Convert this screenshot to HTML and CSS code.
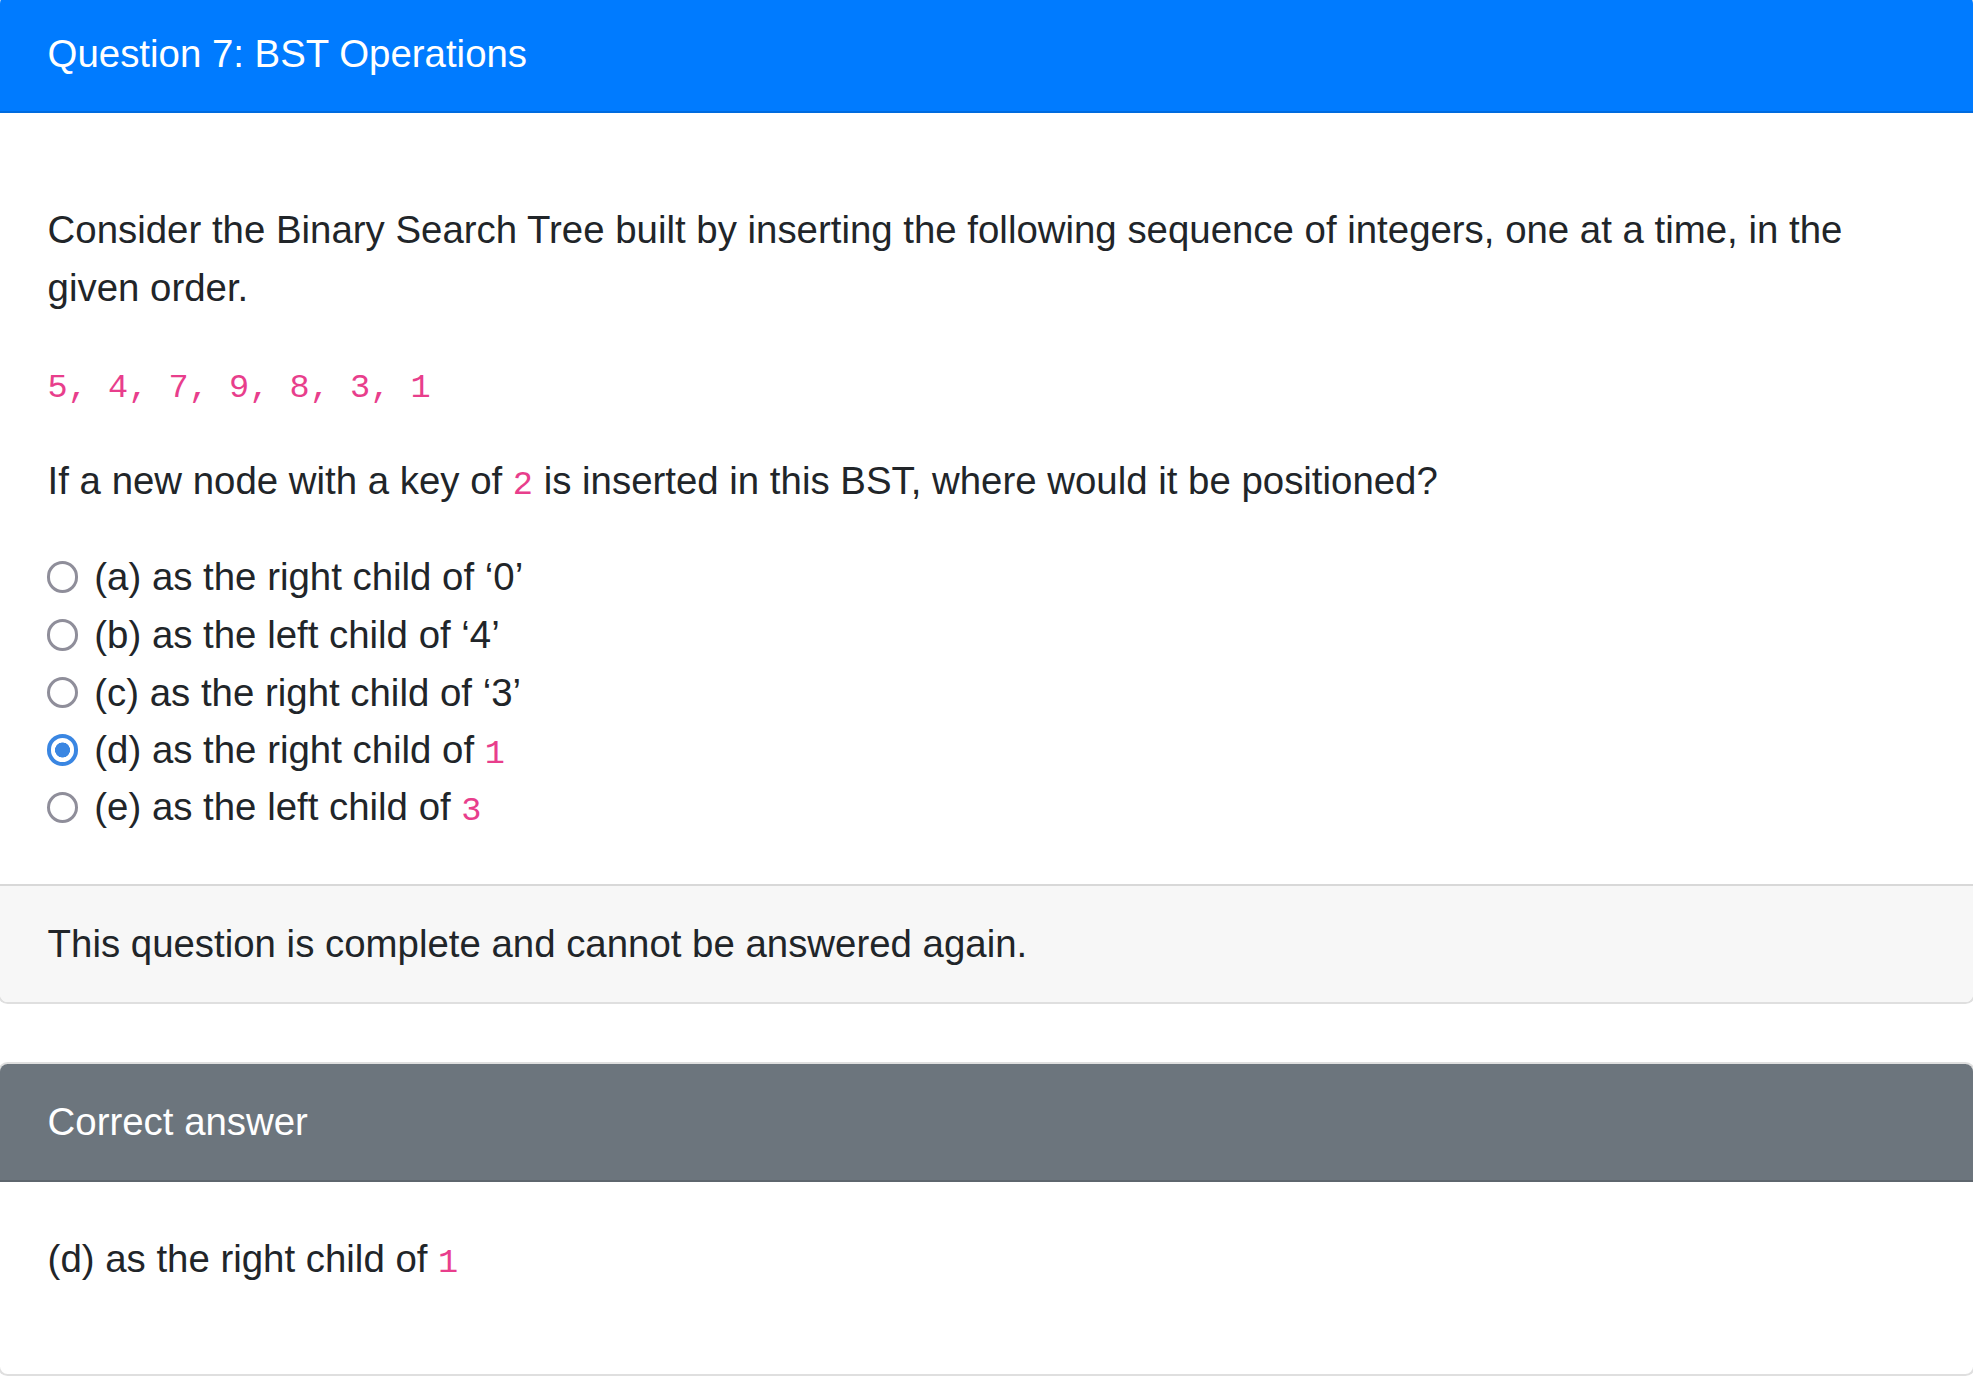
FILE: index.html
```html
<!DOCTYPE html>
<html lang="en">
<head>
<meta charset="utf-8">
<title>Question 7: BST Operations</title>
<link rel="stylesheet" href="styles.css">
</head>
<body>
<div class="page">
  <div class="card card-question">
    <div class="card-header header-primary">Question 7: BST Operations</div>
    <div class="card-body">
      <div class="question">
        <p>Consider the Binary Search Tree built by inserting the following sequence of integers, one at a time, in the given order.</p>
        <p><code>5, 4, 7, 9, 8, 3, 1</code></p>
        <p>If a new node with a key of <code>2</code> is inserted in this BST, where would it be positioned?</p>
      </div>
      <ul class="options">
        <li class="option"><span class="radio"></span><span class="label">(a) as the right child of ‘0’</span></li>
        <li class="option"><span class="radio"></span><span class="label">(b) as the left child of ‘4’</span></li>
        <li class="option"><span class="radio"></span><span class="label">(c) as the right child of ‘3’</span></li>
        <li class="option"><span class="radio radio-checked"></span><span class="label">(d) as the right child of <code>1</code></span></li>
        <li class="option"><span class="radio"></span><span class="label">(e) as the left child of <code>3</code></span></li>
      </ul>
    </div>
    <div class="card-footer">This question is complete and cannot be answered again.</div>
  </div>

  <div class="card card-answer">
    <div class="card-header header-secondary">Correct answer</div>
    <div class="card-body">
      <p class="answer">(d) as the right child of <code>1</code></p>
    </div>
  </div>
</div>
</body>
</html>
```

FILE: styles.css
```css
html, body {
  margin: 0;
  padding: 0;
  background: #ffffff;
}

body {
  font-family: "Liberation Sans", Arial, sans-serif;
  font-size: 38.4px;
  line-height: 1.5;
  color: #212529;
}

.page {
  margin: 0 -2.4px;
}

.card {
  display: flex;
  flex-direction: column;
  border: 2.4px solid rgba(0, 0, 0, 0.125);
  border-radius: 9.6px;
  background: #fff;
  overflow: hidden;
  margin-bottom: 58.8px;
}

.card-question {
  margin-top: -6px;
}

.card-header {
  padding: 28.8px 48px;
  border-bottom: 2.4px solid rgba(0, 0, 0, 0.125);
  color: #fff;
}

.header-primary {
  background: #007bff;
}

.header-secondary {
  background: #6c757d;
}

.card-body {
  padding: 48px;
}

.question {
  margin-top: 40px;
}

p {
  margin: 0 0 38.4px 0;
}

code {
  font-family: "Liberation Mono", "Courier New", monospace;
  font-size: 87.5%;
  color: #e83e8c;
}

.options {
  list-style: none;
  margin: 0;
  padding: 0;
}

.option {
  display: flex;
  align-items: center;
  gap: 16.2px;
  height: 57.6px;
}

.radio {
  flex: none;
  width: 31.5px;
  height: 31.5px;
  box-sizing: border-box;
  border: 3.5px solid #8f8e9a;
  border-radius: 50%;
  background: #fff;
  margin-left: -1px;
}

.radio-checked {
  border: 4px solid #3a86e2;
  background: radial-gradient(circle, #3a86e2 0 7.2px, #fff 7.8px);
}

.card-footer {
  padding: 28.8px 48px;
  background: #f7f7f7;
  border-top: 2.4px solid rgba(0, 0, 0, 0.125);
}

.answer {
  margin: 0 0 38.4px 0;
}
```
